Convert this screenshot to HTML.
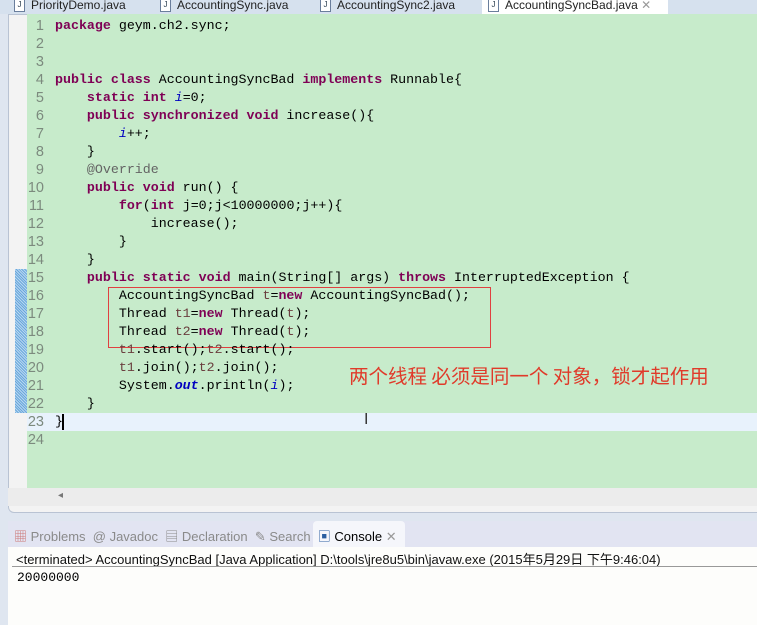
<!DOCTYPE html>
<html><head><meta charset="utf-8"><style>
body{margin:0;width:757px;height:625px;overflow:hidden;background:#dfe6f0;position:relative;font-family:"Liberation Sans","Noto Sans CJK SC",sans-serif}
.abs{position:absolute}
.tabs{left:0;top:0;width:757px;height:14px;background:#d6e1ee;font-size:12px;color:#222}
.tab{position:absolute;top:-4px;height:18px;line-height:18px}
.j{display:inline-block;width:9px;height:11px;border:1px solid #6a7e9c;font-size:8px;line-height:10px;text-align:center;color:#345;margin-right:6px;vertical-align:middle;background:#fff}
.ed{left:8px;top:14px;width:760px;height:497px;background:#f3f3f3;border:1px solid #b9c3d3;border-radius:0 0 0 6px}
.green{left:27px;top:14px;width:730px;height:474px;background:#c7ebcb}
.code{left:0;top:17px;font-family:"Liberation Mono",monospace;font-size:13.3px;line-height:18px;white-space:pre;color:#000}
.k{color:#7f0055;font-weight:bold}
.f{color:#0000c0;font-style:italic}
.v{color:#6a3e3e}
.a{color:#646464}
</style></head><body>
<div class="abs tabs">
 <div class="tab" style="left:14px"><span class="j">J</span>PriorityDemo.java</div>
 <div class="tab" style="left:160px"><span class="j">J</span>AccountingSync.java</div>
 <div class="tab" style="left:320px"><span class="j">J</span>AccountingSync2.java</div>
 <div class="tab" style="left:482px;width:180px;background:#fff;padding-left:6px;top:-4px;height:18px"><span class="j">J</span>AccountingSyncBad.java <span style="color:#999">✕</span></div>
</div>
<div class="abs ed"></div>
<div class="abs green"></div>
<div class="abs" style="left:15px;top:269px;width:12px;height:144px;background:repeating-linear-gradient(45deg,#6aa8dc 0 1px,#b7d6f0 1px 2px)"></div>
<div class="abs" style="left:27px;top:413px;width:730px;height:18px;background:#e8f2fc"></div>
<div class="abs" style="left:8px;top:488px;width:749px;height:18px;background:#ececec"></div>
<div class="abs" style="left:58px;top:490px;font-size:10px;color:#777">◂</div>
<div class="abs" style="left:108px;top:287px;width:381px;height:59px;border:1px solid #e04040"></div>
<div class="abs" style="left:0;top:17px;width:44px;font-family:'Liberation Sans',sans-serif;font-size:14.5px;line-height:18px;color:#7c8a7e;text-align:right;white-space:pre">1
2
3
4
5
6
7
8
9
10
11
12
13
14
15
16
17
18
19
20
21
22
23
24</div>
<div class="abs code" style="left:55px"><span class="k">package</span> geym.ch2.sync;


<span class="k">public class</span> AccountingSyncBad <span class="k">implements</span> Runnable{
    <span class="k">static int</span> <span class="f">i</span>=0;
    <span class="k">public synchronized void</span> increase(){
        <span class="f">i</span>++;
    }
    <span class="a">@Override</span>
    <span class="k">public void</span> run() {
        <span class="k">for</span>(<span class="k">int</span> j=0;j&lt;10000000;j++){
            increase();
        }
    }
    <span class="k">public static void</span> main(String[] args) <span class="k">throws</span> InterruptedException {
        AccountingSyncBad <span class="v">t</span>=<span class="k">new</span> AccountingSyncBad();
        Thread <span class="v">t1</span>=<span class="k">new</span> Thread(<span class="v">t</span>);
        Thread <span class="v">t2</span>=<span class="k">new</span> Thread(<span class="v">t</span>);
        <span class="v">t1</span>.start();<span class="v">t2</span>.start();
        <span class="v">t1</span>.join();<span class="v">t2</span>.join();
        System.<span class="f" style="font-weight:bold">out</span>.println(<span class="f">i</span>);
    }
}
</div>
<div class="abs" style="left:62px;top:414px;width:2px;height:16px;background:#000"></div>
<div class="abs" style="left:349px;top:360px;font-size:19.5px;color:#e03a2a;font-family:'Noto Sans CJK SC',sans-serif;white-space:nowrap">两个线程 必须是同一个 对象，锁才起作用</div>
<div class="abs" style="left:364px;top:411px;font-size:16px;color:#333">I</div>
<div class="abs" style="left:8px;top:521px;width:749px;height:104px;background:#fdfdfb"></div>
<div class="abs" style="left:8px;top:521px;width:749px;height:26px;background:#e2e4f2"></div>
<div class="abs" style="left:313px;top:521px;width:92px;height:26px;background:#f5f6fb;border-radius:4px 4px 0 0"></div>
<div class="abs" style="left:14px;top:526px;font-size:13px;color:#8a8a8a;white-space:pre"><span style="color:#c77">▦</span> Problems  <span>@</span> Javadoc  <span>▤</span> Declaration  <span>✎</span> Search  <span style="color:#000"><span style="color:#2a5ea0">▣</span> Console <span style="color:#999">✕</span></span></div>
<div class="abs" style="left:16px;top:549px;font-size:13px;color:#111;white-space:pre">&lt;terminated&gt; AccountingSyncBad [Java Application] D:\tools\jre8u5\bin\javaw.exe (2015年5月29日 下午9:46:04)</div>
<div class="abs" style="left:12px;top:566px;width:745px;height:1px;background:#999"></div>
<div class="abs" style="left:17px;top:570px;font-family:'Liberation Mono',monospace;font-size:13px;color:#000">20000000</div>
</body></html>
